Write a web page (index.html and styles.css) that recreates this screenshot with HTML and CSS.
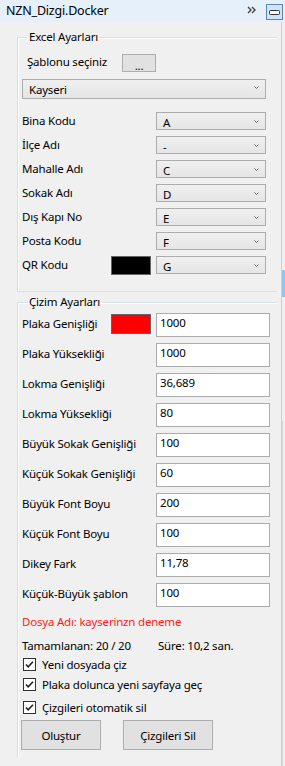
FILE: index.html
```html
<!DOCTYPE html>
<html lang="tr">
<head>
  <meta charset="UTF-8">
  <title>NZN_Dizgi.Docker</title>
  <link rel="stylesheet" href="styles.css">
</head>
<body>
  <div class="titlebar">
    <span class="title">NZN_Dizgi.Docker</span>
    <svg class="chev" width="9" height="8" viewBox="0 0 9 8"><path d="M1 1l3 3-3 3M5 1l3 3-3 3" fill="none" stroke="#444" stroke-width="1.4"/></svg>
    <svg class="minbtn" width="17" height="16" viewBox="0 0 17 16">
      <rect x="0.5" y="0.5" width="16" height="15" fill="#cfe4f8" stroke="#5d87ad"/>
      <rect x="3.5" y="6.5" width="10" height="4" rx="1" fill="#fff" stroke="#333"/>
    </svg>
  </div>

  <div class="frame">
    <div class="panel">
      <fieldset class="group group-excel">
        <legend>Excel Ayarları</legend>
        <div class="template-row">
          <span class="label">Şablonu seçiniz</span>
          <button class="btn btn-dots">...</button>
        </div>
        <div class="combo combo-wide">
          <span>Kayseri</span>
          <svg class="arrow" width="5" height="4" viewBox="0 0 5 4"><path d="M0.5 0.5l2 2 2-2" fill="none" stroke="#666"/></svg>
        </div>
        <div class="field-list">
          <div class="field"><span class="label">Bina Kodu</span><div class="combo"><span>A</span><svg class="arrow" width="5" height="4" viewBox="0 0 5 4"><path d="M0.5 0.5l2 2 2-2" fill="none" stroke="#666"/></svg></div></div>
          <div class="field"><span class="label">İlçe Adı</span><div class="combo"><span>-</span><svg class="arrow" width="5" height="4" viewBox="0 0 5 4"><path d="M0.5 0.5l2 2 2-2" fill="none" stroke="#666"/></svg></div></div>
          <div class="field"><span class="label">Mahalle Adı</span><div class="combo"><span>C</span><svg class="arrow" width="5" height="4" viewBox="0 0 5 4"><path d="M0.5 0.5l2 2 2-2" fill="none" stroke="#666"/></svg></div></div>
          <div class="field"><span class="label">Sokak Adı</span><div class="combo"><span>D</span><svg class="arrow" width="5" height="4" viewBox="0 0 5 4"><path d="M0.5 0.5l2 2 2-2" fill="none" stroke="#666"/></svg></div></div>
          <div class="field"><span class="label">Dış Kapı No</span><div class="combo"><span>E</span><svg class="arrow" width="5" height="4" viewBox="0 0 5 4"><path d="M0.5 0.5l2 2 2-2" fill="none" stroke="#666"/></svg></div></div>
          <div class="field"><span class="label">Posta Kodu</span><div class="combo"><span>F</span><svg class="arrow" width="5" height="4" viewBox="0 0 5 4"><path d="M0.5 0.5l2 2 2-2" fill="none" stroke="#666"/></svg></div></div>
          <div class="field field-qr"><span class="label">QR Kodu</span><span class="swatch swatch-black"></span><div class="combo"><span>G</span><svg class="arrow" width="5" height="4" viewBox="0 0 5 4"><path d="M0.5 0.5l2 2 2-2" fill="none" stroke="#666"/></svg></div></div>
        </div>
      </fieldset>

      <fieldset class="group group-draw">
        <legend>Çizim Ayarları</legend>
        <div class="input-list">
          <div class="input-row"><span class="label">Plaka Genişliği</span><span class="swatch swatch-red"></span><div class="textbox">1000</div></div>
          <div class="input-row"><span class="label">Plaka Yüksekliği</span><div class="textbox">1000</div></div>
          <div class="input-row"><span class="label">Lokma Genişliği</span><div class="textbox">36,689</div></div>
          <div class="input-row"><span class="label">Lokma Yüksekliği</span><div class="textbox">80</div></div>
          <div class="input-row"><span class="label">Büyük Sokak Genişliği</span><div class="textbox">100</div></div>
          <div class="input-row"><span class="label">Küçük Sokak Genişliği</span><div class="textbox">60</div></div>
          <div class="input-row"><span class="label">Büyük Font Boyu</span><div class="textbox">200</div></div>
          <div class="input-row"><span class="label">Küçük Font Boyu</span><div class="textbox">100</div></div>
          <div class="input-row"><span class="label">Dikey Fark</span><div class="textbox">11,78</div></div>
          <div class="input-row"><span class="label">Küçük-Büyük şablon</span><div class="textbox">100</div></div>
        </div>
        <div class="file-name">Dosya Adı: kayserinzn deneme</div>
        <div class="status">
          <span class="status-done">Tamamlanan: 20 / 20</span>
          <span>Süre: 10,2 san.</span>
        </div>
        <div class="check check-1"><svg class="box" width="13" height="13" viewBox="0 0 13 13"><rect x="0.5" y="0.5" width="12" height="12" fill="#fff" stroke="#333"/><path d="M3 6.5l2.2 2.3L10 3.8" fill="none" stroke="#222" stroke-width="1.6"/></svg><span>Yeni dosyada çiz</span></div>
        <div class="check check-2"><svg class="box" width="13" height="13" viewBox="0 0 13 13"><rect x="0.5" y="0.5" width="12" height="12" fill="#fff" stroke="#333"/><path d="M3 6.5l2.2 2.3L10 3.8" fill="none" stroke="#222" stroke-width="1.6"/></svg><span>Plaka dolunca yeni sayfaya geç</span></div>
        <div class="check check-3"><svg class="box" width="13" height="13" viewBox="0 0 13 13"><rect x="0.5" y="0.5" width="12" height="12" fill="#fff" stroke="#333"/><path d="M3 6.5l2.2 2.3L10 3.8" fill="none" stroke="#222" stroke-width="1.6"/></svg><span>Çizgileri otomatik sil</span></div>
        <div class="actions">
          <button class="btn btn-create">Oluştur</button>
          <button class="btn btn-clear">Çizgileri Sil</button>
        </div>
      </fieldset>
    </div>
    <div class="side">
      <div class="side-thumb"></div>
      <div class="side-line"></div>
    </div>
  </div>
</body>
</html>
```

FILE: styles.css
```css
html, body {
  margin: 0;
  padding: 0;
}

body {
  font-family: 'Noto Sans', sans-serif;
  font-size: 11.5px;
  letter-spacing: -0.2px;
  color: #000;
  background-color: #f0f0f0;
  width: 285px;
  height: 766px;
  overflow: hidden;
}

.titlebar {
  height: 22px;
  background-color: #e6f0fa;
  display: flex;
  align-items: center;
  padding-left: 6px;
  box-sizing: border-box;
}

.title {
  font-size: 12.5px;
  flex: 1;
  margin-top: -1px;
}

.chev {
  margin-right: 10px;
  margin-top: -2px;
}

.minbtn {
  margin-right: 2px;
  margin-top: 1px;
}

.frame {
  display: flex;
  height: 744px;
}

.panel {
  width: 282px;
  border-right: 1px solid #cfcfcf;
  box-sizing: border-box;
}

.side {
  width: 3px;
  display: flex;
  flex-direction: column;
}

.side-thumb {
  margin-top: 248px;
  height: 27px;
  background-color: #8cc4f2;
}

.side-line {
  margin-top: 124px;
  flex: 1;
  border-left: 1px solid #d6d6d6;
}

/* group boxes */
.group {
  margin: 0 0 0 17px;
  width: 260px;
  box-sizing: border-box;
  border: 1px solid #d5dfe5;
  border-right: none;
  box-shadow: inset 1px 1px 0 #fff;
  padding: 0 11px 0 4px;
  min-width: 0;
}

.group legend {
  padding: 0 2px;
  margin-left: 5px;
  line-height: 16px;
}

.group-excel {
  margin-top: 7px;
  padding-bottom: 16px;
}

.group-draw {
  margin-top: 2px;
  padding-right: 7px;
  border-bottom: none;
  padding-bottom: 8px;
}

.label {
  white-space: nowrap;
}

.template-row {
  display: flex;
  align-items: center;
  margin-top: 9px;
  padding-left: 5px;
}

.template-row .label {
  width: 95px;
  margin-top: -3px;
}

/* buttons */
.btn {
  font-family: inherit;
  font-size: 11.5px;
  letter-spacing: -0.2px;
  background-color: #e1e1e1;
  border: 1px solid #adadad;
  color: #000;
  padding: 0;
  margin: 0;
  box-sizing: border-box;
}

.btn-dots {
  width: 34px;
  height: 18px;
  line-height: 18px;
  padding-top: 2px;
}

/* combos */
.combo {
  height: 18px;
  width: 110px;
  box-sizing: border-box;
  border: 1px solid #acacac;
  background: linear-gradient(#f0f0f0, #e5e5e5);
  display: flex;
  justify-content: space-between;
  padding: 2px 6px 0 6px;
  line-height: 16px;
}

.combo .arrow {
  margin-top: 5px;
}

.combo-wide {
  width: 244px;
  height: 20px;
  margin-top: 7px;
  padding-top: 1px;
  line-height: 17px;
}

.field-list {
  margin-top: 13px;
  display: flex;
  flex-direction: column;
  gap: 6px;
}

.field {
  display: flex;
  align-items: center;
  height: 18px;
}

.field .label {
  flex: 1;
  margin-top: -1px;
}

.field-qr {
  height: 19px;
  align-items: flex-start;
}

.field-qr .label {
  margin-top: 1px;
}

.swatch {
  width: 40px;
  margin-right: 5px;
  box-sizing: border-box;
  border: 1px solid #646464;
}

.swatch-black {
  height: 19px;
  background-color: #000;
}

.swatch-red {
  height: 20px;
  background-color: #ff0000;
  align-self: flex-start;
  margin-top: 1px;
}

/* inputs */
.input-list {
  margin-top: 3px;
  display: flex;
  flex-direction: column;
  gap: 6px;
}

.input-row {
  display: flex;
  align-items: center;
  height: 24px;
}

.input-row .label {
  flex: 1;
  padding-bottom: 4px;
}

.textbox {
  width: 114px;
  height: 24px;
  box-sizing: border-box;
  border: 1px solid #acacac;
  background-color: #fff;
  padding: 1px 3px 0 3px;
  line-height: 16px;
}

.file-name {
  color: #ff1a1a;
  margin-top: 7px;
  line-height: 16px;
}

.status {
  display: flex;
  margin-top: 8px;
  line-height: 16px;
}

.status-done {
  width: 136px;
}

.check {
  display: flex;
  align-items: center;
  height: 16px;
  padding-left: 1px;
}

.check .box {
  margin-right: 6px;
}

.check-1 {
  margin-top: 2px;
}

.check-2 {
  margin-top: 4px;
}

.check-3 {
  margin-top: 7px;
}

.actions {
  display: flex;
  gap: 22px;
  margin-top: 5px;
  margin-left: -1px;
}

.btn-create {
  width: 80px;
  height: 30px;
}

.btn-clear {
  width: 90px;
  height: 30px;
}
```
